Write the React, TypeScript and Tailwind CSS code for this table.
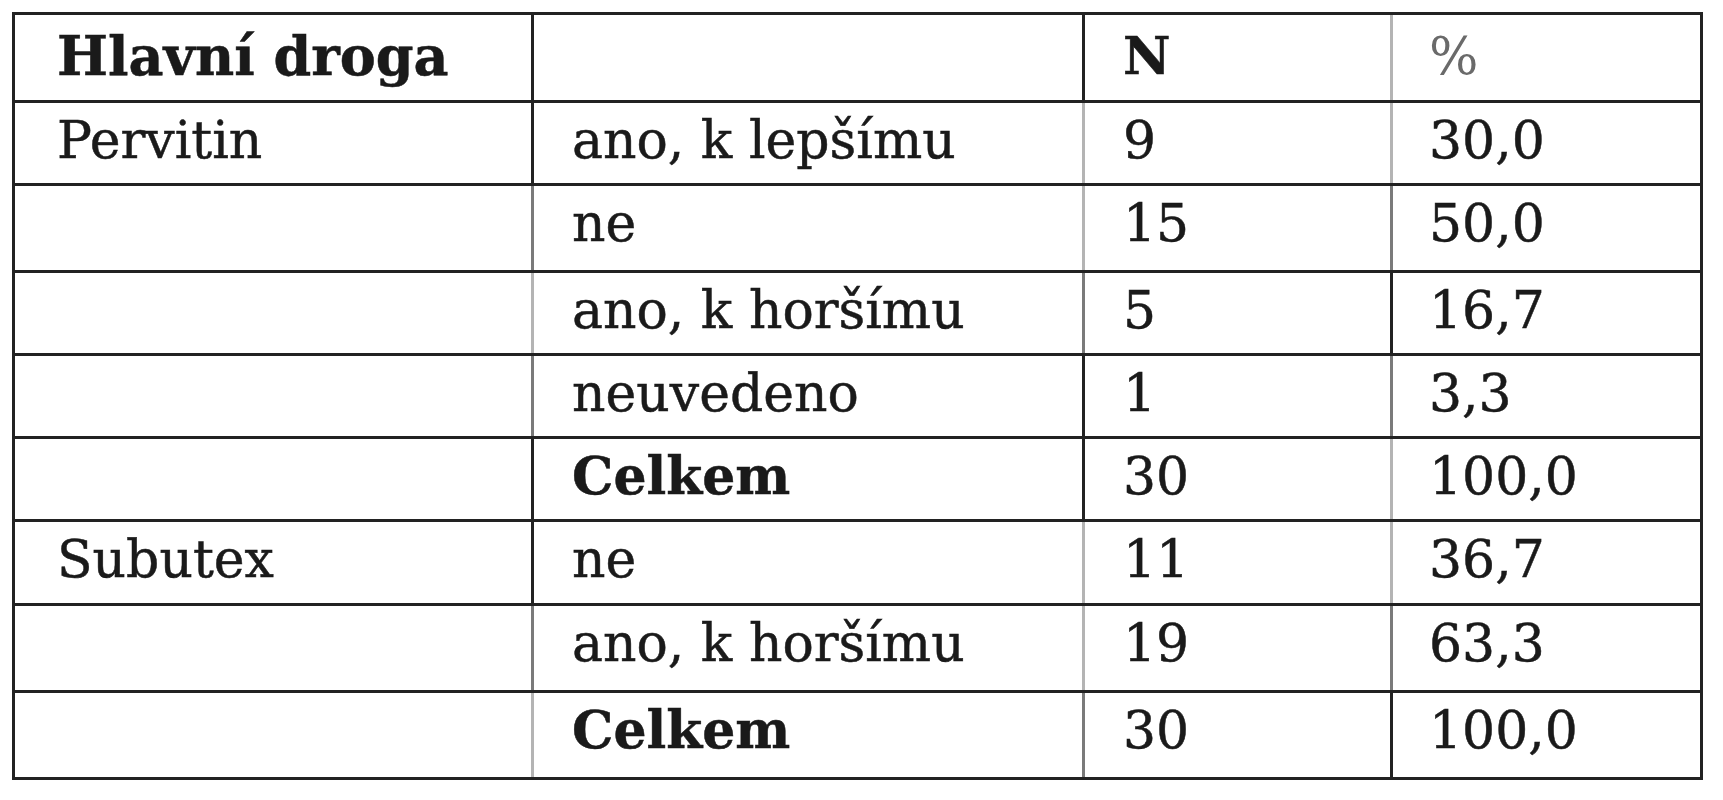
const DARK = "border-[#222]";
const MID = "border-[#7a7a7a]";
const LIGHT = "border-[#b4b4b4]";

type Row = {
  drug: string;
  answer: string;
  n: string;
  pct: string;
  bold?: boolean;
  h: string;
  lines: [string, string, string];
};

// heights include the 3px top rule (border-box)
const ROWS: Row[] = [
  { drug: "Pervitin", answer: "ano, k lepšímu", n: "9", pct: "30,0", h: "h-[83px]", lines: [DARK, LIGHT, LIGHT] },
  { drug: "", answer: "ne", n: "15", pct: "50,0", h: "h-[87px]", lines: [MID, LIGHT, MID] },
  { drug: "", answer: "ano, k horšímu", n: "5", pct: "16,7", h: "h-[83px]", lines: [LIGHT, MID, DARK] },
  { drug: "", answer: "neuvedeno", n: "1", pct: "3,3", h: "h-[83px]", lines: [MID, DARK, MID] },
  { drug: "", answer: "Celkem", n: "30", pct: "100,0", bold: true, h: "h-[83px]", lines: [DARK, DARK, LIGHT] },
  { drug: "Subutex", answer: "ne", n: "11", pct: "36,7", h: "h-[84px]", lines: [DARK, LIGHT, LIGHT] },
  { drug: "", answer: "ano, k horšímu", n: "19", pct: "63,3", h: "h-[87px]", lines: [MID, LIGHT, MID] },
  { drug: "", answer: "Celkem", n: "30", pct: "100,0", bold: true, h: "h-[87px]", lines: [LIGHT, MID, DARK] },
];

const GRID = "grid grid-cols-[516px_551px_308px_310px]";

export default function App() {
  return (
    <div className="min-h-screen bg-white pl-[12px] pt-[12px] font-['DejaVu_Serif',serif] text-[52px] leading-[52px] text-[#1a1a1a] [-webkit-text-stroke:0.5px_#1a1a1a]">
      <div className="w-[1691px] border-[3px] border-[#222]">
        {/* header */}
        <div className={`${GRID} h-[85px]`}>
          <div className="pl-[42px] pt-[15px] text-[54px] font-bold">Hlavní droga</div>
          <div className={`border-l-[3px] ${DARK}`} />
          <div className={`border-l-[3px] ${DARK} pl-[38px] pt-[15px] font-bold`}>N</div>
          <div className={`border-l-[3px] ${LIGHT} pl-[36px] pt-[15px] text-[#6a6a6a] [-webkit-text-stroke:0px]`}>%</div>
        </div>

        {ROWS.map((r, i) => (
          <div key={i} className={`${GRID} ${r.h} border-t-[3px] border-[#222]`}>
            <div className="pl-[42px] pt-[11px]">{r.drug}</div>
            <div className={`border-l-[3px] ${r.lines[0]} pl-[38px] pt-[11px] ${r.bold ? "font-bold" : ""}`}>
              {r.answer}
            </div>
            <div className={`border-l-[3px] ${r.lines[1]} pl-[38px] pt-[11px]`}>{r.n}</div>
            <div className={`border-l-[3px] ${r.lines[2]} pl-[36px] pt-[11px]`}>{r.pct}</div>
          </div>
        ))}
      </div>
    </div>
  );
}
